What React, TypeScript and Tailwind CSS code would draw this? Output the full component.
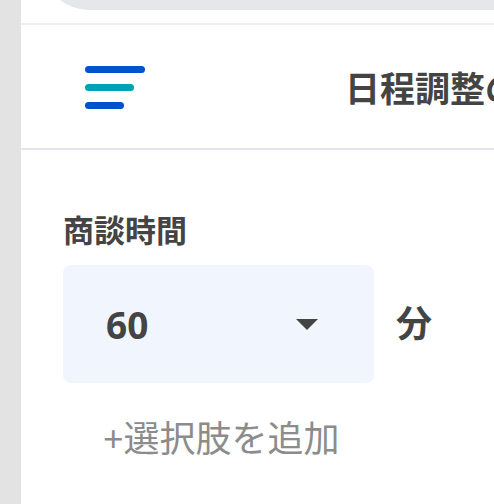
const font = { fontFamily: '"Noto Sans", "Noto Sans CJK JP", sans-serif' };

function MenuIcon() {
  return (
    <div className="flex flex-col gap-[11px] w-[60px] mt-[2px]">
      <span className="block h-[7px] w-[60px] rounded-full bg-[#0052cf]" />
      <span className="block h-[7px] w-[49px] rounded-full bg-[#00a2b4]" />
      <span className="block h-[7px] w-[39px] rounded-full bg-[#0052cf]" />
    </div>
  );
}

export default function App() {
  return (
    <div className="flex w-[494px] h-[504px] overflow-hidden bg-white" style={font}>
      <div className="w-[21px] shrink-0 bg-[#e3e3e3]" />
      <div className="flex-1 flex flex-col min-w-0">
        {/* top search bar, cut off */}
        <div className="h-[23px] overflow-hidden">
          <div className="h-[100px] -mt-[90px] ml-[19px] rounded-l-[50px] bg-[#e5e7eb]" />
        </div>
        <div className="h-[2px] bg-[#eeeeee]" />

        {/* header */}
        <header className="h-[125px] flex items-center border-b-2 border-[#e6e4f2] pl-[64px] overflow-hidden">
          <MenuIcon />
          <h1 className="ml-[200px] whitespace-nowrap text-[35px] font-bold text-[#444] leading-none mt-[4px]">
            日程調整の設定
          </h1>
        </header>

        {/* body */}
        <section className="pl-[42px] pt-[65px]">
          <p className="text-[31px] font-bold text-[#444] leading-none">商談時間</p>
          <div className="flex items-center mt-[19px]">
            <button className="w-[311px] h-[118px] rounded-[8px] bg-[#f1f6fe] flex items-center justify-between pl-[43px] pr-[56px]">
              <span className="text-[37px] font-bold text-[#444] leading-none">60</span>
              <svg width="22" height="11" viewBox="0 0 22 11">
                <path d="M0 0 H22 L11 11 Z" fill="#444" />
              </svg>
            </button>
            <span className="ml-[22px] text-[36px] font-bold text-[#444] leading-none">分</span>
          </div>
          <button className="mt-[38px] ml-[40px] text-[36px] text-[#8c8c8c] leading-none">
            +選択肢を追加
          </button>
        </section>
      </div>
    </div>
  );
}
